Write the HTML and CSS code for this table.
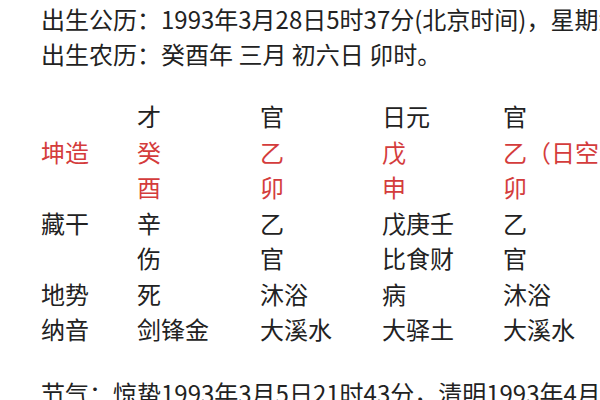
FILE: index.html
```html
<!DOCTYPE html>
<html lang="zh">
<head>
<meta charset="utf-8">
<link rel="stylesheet" href="styles.css">
</head>
<body>
<div class="page">
  <div class="line">出生公历：1993年3月28日5时37分(北京时间)，星期六</div>
  <div class="line">出生农历：癸酉年 三月 初六日 卯时。</div>
  <div class="chart">
    <div></div><div>才</div><div>官</div><div>日元</div><div>官</div>
    <div class="red">坤造</div><div class="red">癸</div><div class="red">乙</div><div class="red">戊</div><div class="red">乙（日空）</div>
    <div></div><div class="red">酉</div><div class="red">卯</div><div class="red">申</div><div class="red">卯</div>
    <div>藏干</div><div>辛</div><div>乙</div><div>戊庚壬</div><div>乙</div>
    <div></div><div>伤</div><div>官</div><div>比食财</div><div>官</div>
    <div>地势</div><div>死</div><div>沐浴</div><div>病</div><div>沐浴</div>
    <div>纳音</div><div>剑锋金</div><div>大溪水</div><div>大驿土</div><div>大溪水</div>
  </div>
  <div class="line">节气：惊蛰1993年3月5日21时43分，清明1993年4月5日</div>
</div>
</body>
</html>
```
FILE: styles.css
```css
html, body {
  margin: 0;
  padding: 0;
  background: #ffffff;
}
.page {
  width: 600px;
  height: 400px;
  overflow: hidden;
  padding: 1px 0 0 41px;
  box-sizing: border-box;
  font-family: "Noto Sans CJK SC", "Noto Sans", sans-serif;
  font-size: 24px;
  line-height: 35px;
  color: #222222;
}
.line {
  white-space: nowrap;
}
.chart {
  display: grid;
  grid-template-columns: 96px 123px 122px 121px auto;
  grid-auto-rows: 35.5px;
  line-height: 35.5px;
  margin: 27px 0 28px 0;
  white-space: nowrap;
}
.red {
  color: #d43c3c;
}
```
